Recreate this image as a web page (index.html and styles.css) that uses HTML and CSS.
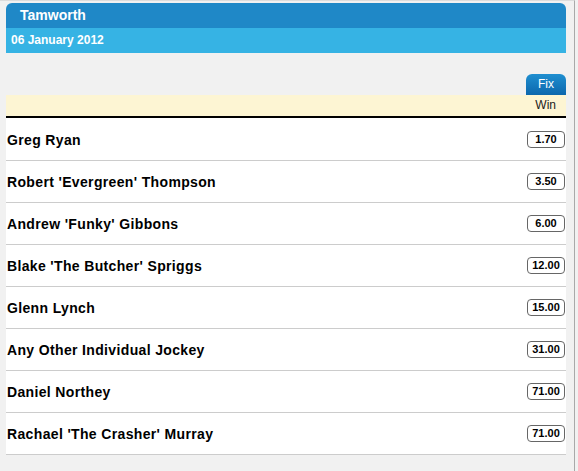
FILE: index.html
```html
<!DOCTYPE html>
<html>
<head>
<meta charset="utf-8">
<link rel="stylesheet" href="styles.css">
</head>
<body>
<div class="page">
  <div class="card">
    <div class="head">Tamworth</div>
    <div class="date">06 January 2012</div>
    <div class="tabs"><span class="tab">Fix</span></div>
    <div class="colhead">Win</div>
    <div class="rows">
      <div class="row"><span class="name">Greg Ryan</span><span class="odds">1.70</span></div>
      <div class="row"><span class="name">Robert 'Evergreen' Thompson</span><span class="odds">3.50</span></div>
      <div class="row"><span class="name">Andrew 'Funky' Gibbons</span><span class="odds">6.00</span></div>
      <div class="row"><span class="name">Blake 'The Butcher' Spriggs</span><span class="odds">12.00</span></div>
      <div class="row"><span class="name">Glenn Lynch</span><span class="odds">15.00</span></div>
      <div class="row"><span class="name">Any Other Individual Jockey</span><span class="odds">31.00</span></div>
      <div class="row"><span class="name">Daniel Northey</span><span class="odds">71.00</span></div>
      <div class="row"><span class="name">Rachael 'The Crasher' Murray</span><span class="odds">71.00</span></div>
    </div>
  </div>
</div>
</body>
</html>
```
FILE: styles.css
```css
html, body {
  margin: 0;
  padding: 0;
  background: #f1f1f1;
  font-family: "Liberation Sans", Arial, sans-serif;
}
.page {
  width: 575px;
  height: 471px;
  box-sizing: border-box;
  border-right: 1px solid #a9a9a9;
  border-top: 1px solid #dcdcdc;
  padding: 2px 0 0 6px;
}
.card {
  width: 560px;
}
.head {
  background: #1f88c7;
  color: #fff;
  font-weight: bold;
  font-size: 14px;
  height: 25px;
  line-height: 25px;
  padding-left: 14px;
  border-radius: 6px 6px 0 0;
}
.date {
  background: #36b3e4;
  color: #fff;
  font-weight: bold;
  font-size: 12px;
  height: 25px;
  line-height: 25px;
  padding-left: 5px;
}
.tabs {
  display: flex;
  justify-content: flex-end;
  margin-top: 21px;
}
.tab {
  width: 40px;
  height: 21px;
  line-height: 21px;
  text-align: center;
  color: #fff;
  font-size: 12px;
  border-radius: 6px 6px 0 0;
  background: linear-gradient(#1f8fd0, #0c67ad);
}
.colhead {
  background: #fdf5d3;
  height: 21px;
  line-height: 21px;
  text-align: right;
  font-size: 12px;
  color: #222;
  padding-right: 10px;
  border-bottom: 2px solid #000;
}
.rows {
  background: #fff;
  padding-top: 1px;
}
.row {
  height: 41px;
  border-bottom: 1px solid #cccccc;
  display: flex;
  align-items: center;
  justify-content: space-between;
  padding: 0 1px 0 1px;
}
.name {
  font-weight: bold;
  font-size: 14px;
  letter-spacing: 0.35px;
  color: #000;
}
.odds {
  width: 36px;
  height: 15px;
  line-height: 15px;
  border: 1px solid #666;
  border-radius: 4px;
  text-align: center;
  font-weight: bold;
  font-size: 11px;
  color: #000;
  background: #fff;
}
```
